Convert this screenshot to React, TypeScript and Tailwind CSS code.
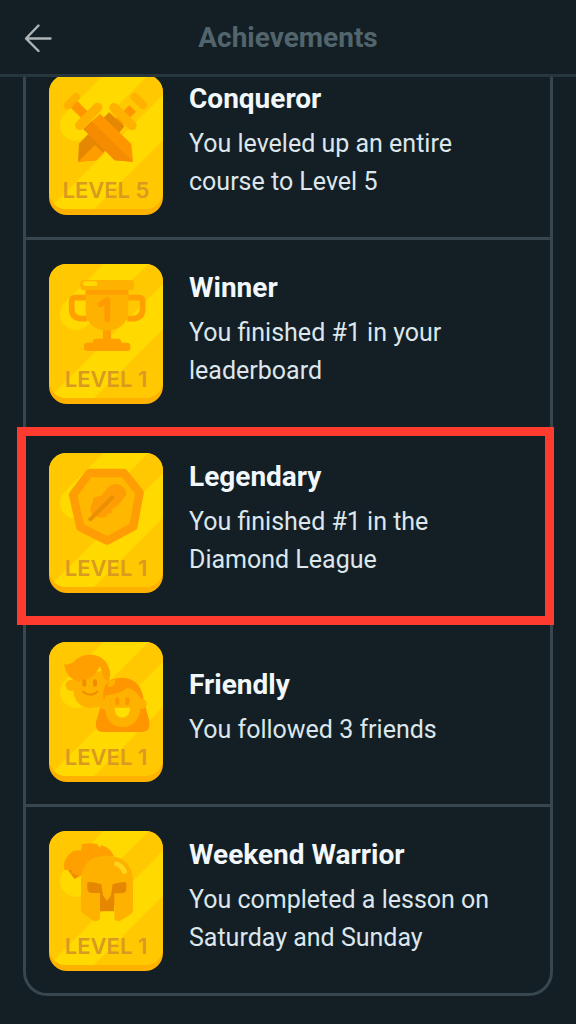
import type { ReactNode } from 'react';
import { useId } from 'react';

type Achievement = {
  id: string;
  name: string;
  description: string;
  level: number;
  icon: ReactNode;
  highlighted?: boolean;
  // the row next to a highlighted one has no visible divider
  hideDivider?: boolean;
};

function SwordsIcon() {
  return (
    <g strokeLinecap="round" transform="translate(0 12)">
      <path d="M278 112L236 154" stroke="#ff9600" strokeWidth="28" strokeLinecap="butt" />
      <path d="M207 124L253 166L187 249L168 268L114 272L117 218Z" fill="#e58700" />
      <path d="M165 222L114 272L168 268L190 247Z" fill="#ff9d00" />
      <path d="M222 110L276 164" stroke="#ffb100" strokeWidth="28" />
      <path d="M284 78L309 102" stroke="#ffb100" strokeWidth="24" />
      <path d="M100 98L140 138" stroke="#ff9600" strokeWidth="28" strokeLinecap="butt" />
      <path d="M180 128L274 219L279 272L224 268L130 174Z" fill="#ff9600" />
      <path d="M155 150L279 272L224 268L130 174Z" fill="#f58b00" />
      <path d="M119 163L173 109" stroke="#ffb100" strokeWidth="28" />
      <path d="M83 103L108 78" stroke="#ffb100" strokeWidth="24" />
    </g>
  );
}

function TrophyIcon() {
  return (
    <g>
      <path
        d="M138 125H106Q95 125 95 136V158Q95 188 128 188H142M264 125H297Q308 125 308 136V158Q308 188 275 188H262"
        fill="none"
        stroke="#ffa000"
        strokeWidth="17"
      />
      <path d="M189 216H213V248H235Q244 248 244 260H262Q271 260 271 269V276Q271 285 262 285H141Q132 285 132 276V269Q132 260 141 260H158Q158 248 168 248H189Z" fill="#ffa000" />
      <path d="M137 100H265V161Q265 205 225 220Q201 228 177 220Q137 205 137 161Z" fill="#ffb100" />
      <path d="M137 100H265V116H137Z" fill="#ffa000" />
      <rect x="121" y="72" width="161" height="30" rx="9" fill="#ffb100" />
      <rect x="129" y="76" width="43" height="14" rx="6" fill="#ffd900" />
      <path d="M181 145L202 132V190" fill="none" stroke="#ff9b00" strokeWidth="17" strokeLinecap="round" strokeLinejoin="round" />
    </g>
  );
}

function LegendIcon() {
  return (
    <g strokeLinecap="round" strokeLinejoin="round">
      <path d="M148 84H252L299 143L280 245L202 287L121 247L99 149Z" fill="#ffb700" stroke="#ff9d05" strokeWidth="25" />
      <path
        d="M184 151L205 127Q222 112 241 120Q263 132 257 152L235 180Q224 192 211 194L217 200Q208 209 198 207L203 214Q184 222 165 213L153 203Q148 187 156 177Q162 171 157 162Q173 151 187 153Z"
        fill="#ff9d05"
      />
      <path d="M151 223L217 157" fill="none" stroke="#eb8f04" strokeWidth="12" />
    </g>
  );
}

function FriendsIcon() {
  return (
    <g>
      <path d="M98 125L205 108V188Q190 222 151 222Q111 220 101 180Z" fill="#ffb100" />
      <circle cx="94" cy="154" r="17" fill="#ffb100" />
      <circle cx="208" cy="153" r="17" fill="#ffb100" />
      <path d="M72 91Q92 93 104 80Q123 62 152 62Q195 64 207 103Q214 119 207 139Q193 139 190 128Q187 111 179 97Q163 137 114 143Q80 134 72 91Z" fill="#ffa000" />
      <path d="M133 142V152M165 142V152" stroke="#f08c00" strokeWidth="12" strokeLinecap="round" />
      <path d="M129 173Q151 191 172 173" fill="none" stroke="#f08c00" strokeWidth="6" strokeLinecap="round" />
      <path d="M190 190Q185 133 247 131Q303 134 311 197L328 260Q331 294 309 294H184Q164 292 168 264Z" fill="#ff9600" />
      <path d="M195 185Q240 180 261 162Q283 164 301 190V228Q293 278 247 279Q203 277 195 228Z" fill="#ffb100" />
      <circle cx="191" cy="210" r="16" fill="#ffb100" />
      <circle cx="304" cy="209" r="16" fill="#ffb100" />
      <path d="M203 159Q225 161 226 141Q219 133 207 140Z" fill="#ffb100" />
      <path d="M232 196V208M262 196V208" stroke="#ff9600" strokeWidth="12" strokeLinecap="round" />
      <path d="M224 225Q224 221 228 221H266Q270 221 270 225Q268 251 247 251Q226 251 224 225Z" fill="#ffe000" />
    </g>
  );
}

function HelmetIcon() {
  return (
    <g>
      <path d="M73 140L84 141L104 168L126 157L155 110L222 99Q211 74 184 66L180 74L170 62Q146 58 126 64L123 82L101 83Q72 101 71 131Z" fill="#ffa000" />
      <path d="M84 141H98L93 149L116 158L104 168Z" fill="#f08c00" />
      <path d="M136 170H266V248H222V265H180V240L136 205Z" fill="#e58700" />
      <path
        fillRule="evenodd"
        d="M123 169Q127 99 201 98Q274 100 279 169V262Q279 269 272 274L240 294Q232 297 223 288V211H247Q259 209 259 198V179Q254 174 218 184L213 217L201 234L189 217L184 184Q146 173 142 180V198Q143 208 154 210H180V288Q171 299 160 293L128 270Q123 266 123 260Z"
        fill="#ffb100"
      />
      <path d="M230 123Q247 129 253 145" fill="none" stroke="#ffd51a" strokeWidth="15" strokeLinecap="round" />
    </g>
  );
}

const achievements: Achievement[] = [
  {
    id: 'conqueror',
    name: 'Conqueror',
    description: 'You leveled up an entire course to Level 5',
    level: 5,
    icon: <SwordsIcon />,
  },
  {
    id: 'winner',
    name: 'Winner',
    description: 'You finished #1 in your leaderboard',
    level: 1,
    icon: <TrophyIcon />,
    hideDivider: true,
  },
  {
    id: 'legendary',
    name: 'Legendary',
    description: 'You finished #1 in the Diamond League',
    level: 1,
    icon: <LegendIcon />,
    highlighted: true,
    hideDivider: true,
  },
  {
    id: 'friendly',
    name: 'Friendly',
    description: 'You followed 3 friends',
    level: 1,
    icon: <FriendsIcon />,
  },
  {
    id: 'weekend-warrior',
    name: 'Weekend Warrior',
    description: 'You completed a lesson on Saturday and Sunday',
    level: 1,
    icon: <HelmetIcon />,
  },
];

function Badge({ level, icon }: { level: number; icon: ReactNode }) {
  const clipId = useId();

  return (
    <div className="grid w-[114px] shrink-0">
      <svg viewBox="0 0 114 140" className="col-start-1 row-start-1 w-full" aria-hidden="true">
        <clipPath id={clipId}>
          <rect width="114" height="134" rx="17" />
        </clipPath>
        <rect width="114" height="140" rx="18" fill="#ffb100" />
        <g clipPath={`url(#${clipId})`}>
          <rect width="114" height="134" fill="#ffc800" />
          <path d="M27 50L107 -30" stroke="#ffd900" strokeWidth="32" strokeLinecap="round" />
          <path d="M134 0L0 134V179L179 0Z" fill="#ffd900" />
        </g>
        <g transform="translate(-9 -8) scale(0.3333)">{icon}</g>
      </svg>
      <span className="col-start-1 row-start-1 mb-[11px] self-end text-center font-[Inter,sans-serif] text-[22px] leading-7 font-semibold text-[#d99a22]">
        LEVEL {level}
      </span>
    </div>
  );
}

function AchievementRow({ achievement }: { achievement: Achievement }) {
  const { name, description, level, icon, highlighted, hideDivider } = achievement;

  return (
    <li
      className={`relative flex items-center gap-[26px] border-b-[3px] px-[23px] pt-6 pb-[22px] last:border-b-0 ${
        hideDivider ? 'border-transparent' : 'border-[#37464f]'
      }`}
    >
      <Badge level={level} icon={icon} />
      <div className="max-w-[310px] pb-1">
        <h2 className="mb-3 text-[28px] leading-7 font-bold text-[#f1f7fb]">{name}</h2>
        <p className="text-[25px] leading-[38px] text-[#dce6ec]">{description}</p>
      </div>
      {highlighted ? (
        <div className="pointer-events-none absolute -top-0.5 -right-1 -bottom-2.5 -left-[9px] border-[9px] border-[#ff3b30]" />
      ) : null}
    </li>
  );
}

export default function App() {
  return (
    <div className="min-h-screen bg-[#131f24] font-[Roboto,sans-serif]">
      <header className="relative z-10 grid grid-cols-[1fr_auto_1fr] items-center border-b-[3px] border-[#28363d] bg-[#131f24] px-6 pt-5 pb-[18px]">
        <button type="button" aria-label="Back" className="justify-self-start">
          <svg viewBox="0 0 28 28" className="w-7" fill="none" stroke="#afb4b7" strokeWidth="2.4" strokeLinecap="round" strokeLinejoin="round">
            <path d="M14.5 1.5L2 14.5L14.5 27M2.500 14.500H26.500" />
          </svg>
        </button>
        <h1 className="text-[28px] leading-9 font-bold text-[#52656d]">Achievements</h1>
      </header>
      <main className="px-[23px] pb-7">
        <ul className="-mt-[26px] rounded-b-3xl border-x-[3px] border-b-[3px] border-[#37464f]">
          {achievements.map((achievement) => (
            <AchievementRow key={achievement.id} achievement={achievement} />
          ))}
        </ul>
      </main>
    </div>
  );
}
